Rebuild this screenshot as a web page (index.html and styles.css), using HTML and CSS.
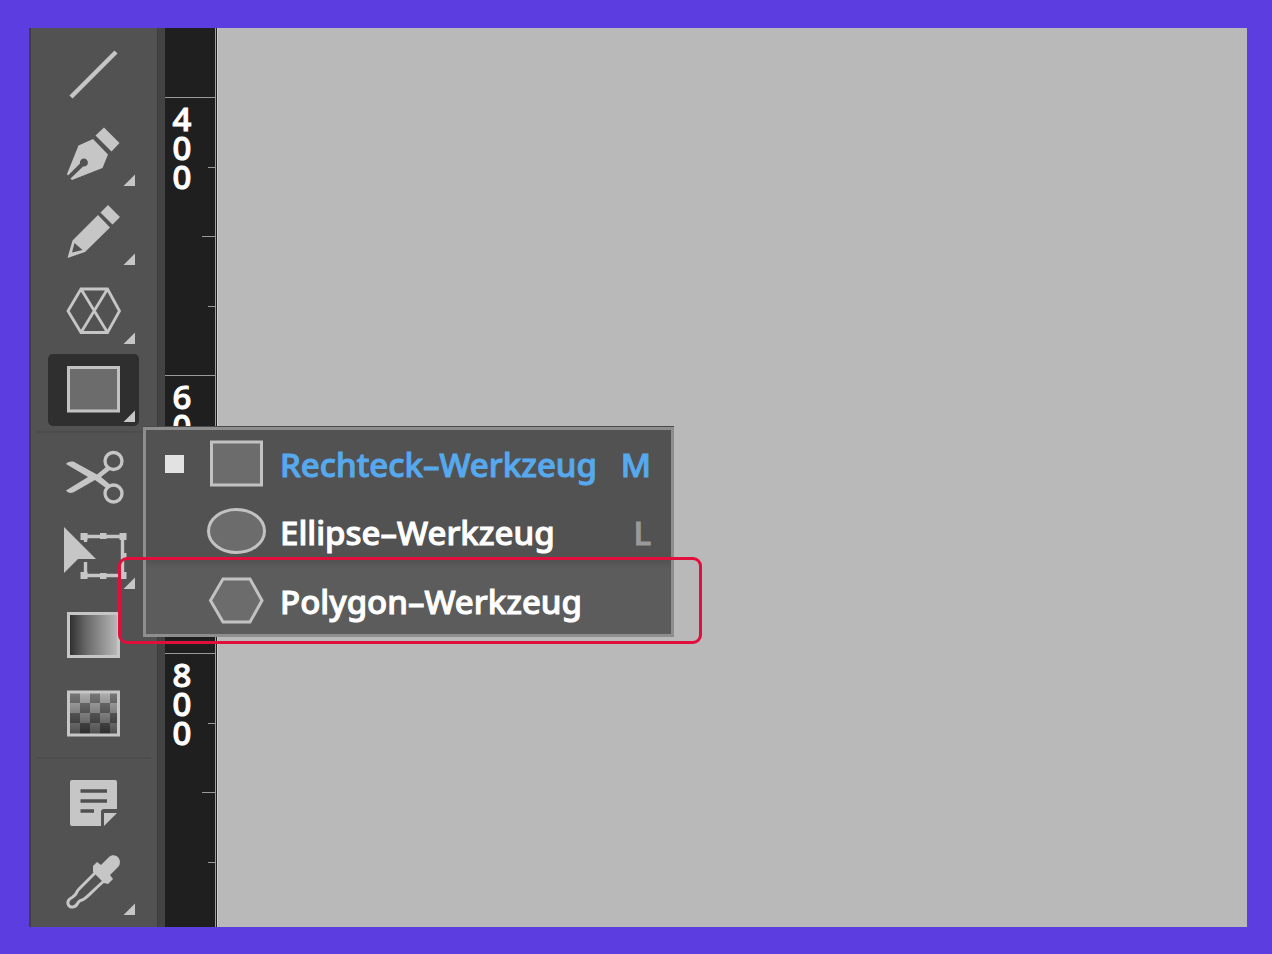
FILE: index.html
```html
<!DOCTYPE html>
<html lang="de">
<head>
<meta charset="utf-8">
<title>Polygon-Werkzeug</title>
<link rel="stylesheet" href="styles.css">
</head>
<body>
<main class="workspace">
  <nav class="toolbar" aria-label="Werkzeuge">
    <div class="group">
      <button class="tool" aria-label="Liniensegment"><svg viewBox="0 0 91 72"><path class="line" stroke-width="4.400" d="M23 59 68 14"/></svg></button>
      <button class="tool" aria-label="Zeichenstift"><svg viewBox="0 0 91 72"><path class="solid" d="M56 10.500 71.500 26 63.500 34.500 47.500 18.500ZM45 22 60 37.500 54.500 51 24 63 22.500 61.500 35 49.500A4 4 0 1 0 32 46.500L20 58.500 19 57 30.500 28.500Z"/><path class="corner" d="M87 57.500V69H75.500Z"/></svg></button>
      <button class="tool" aria-label="Buntstift"><svg viewBox="0 0 91 72"><path class="solid" fill-rule="evenodd" d="M60 9 72 21 64.500 28.500 52.500 16.500ZM50 19 62 31.500 37 56 19.500 62 24.500 44.500ZM26.500 47 24 56.500 34.500 54Z"/><path class="corner" d="M87 57.500V69H75.500Z"/></svg></button>
      <button class="tool" aria-label="Polarraster"><svg viewBox="0 0 91 72"><path class="line" stroke-width="2.800" d="M33 14H59.500L71.500 36 59.500 57.500H33L20 36ZM33 14 59.500 57.500M59.500 14 33 57.500"/><path class="corner" d="M87 57.500V69H75.500Z"/></svg></button>
      <button class="tool selected" aria-label="Rechteck-Werkzeug"><svg viewBox="0 0 91 72"><rect class="shape" x="20.500" y="13.500" width="50" height="43.500"/><path class="corner" d="M87 56.500V68H75.500Z"/></svg></button>
    </div>
    <div class="group">
      <button class="tool" aria-label="Schere"><svg viewBox="0 0 91 72"><circle class="line" stroke-width="3.300" cx="65.500" cy="20" r="8.500"/><circle class="line" stroke-width="3.300" cx="65.500" cy="52.500" r="8.500"/><path class="solid" d="M18 23C21 20 25 20 28 22L49 33.500 58 26 62 29 53 36 62 43.500 58 47 47 39 27 50.500C23 53 20 52 18 49.500L40 36Z"/></svg></button>
      <button class="tool" aria-label="Frei transformieren"><svg viewBox="0 0 91 72"><path class="line" stroke-width="3.400" d="M37 16.500H74.500V55.500H37M37.500 13V22M37.500 42V58"/><path class="solid" d="M32.500 13H39.500V20H32.500ZM52 13H58.500V19H52ZM71.500 13H78.500V20H71.500ZM74 33H78.500V39H74ZM32.500 52H39.500V59H32.500ZM52 53H58.500V59H52ZM71.500 52H78.500V59H71.500Z"/><path class="cursor" d="M16 7 48 39H30L16 53Z"/><path class="corner" d="M87 57.500V69H75.500Z"/></svg></button>
      <button class="tool" aria-label="Verlauf"><svg viewBox="0 0 91 72"><defs><linearGradient id="fade"><stop offset="0" stop-color="#2c2c2c"/><stop offset=".35" stop-color="#686868"/><stop offset="1" stop-color="#bbb"/></linearGradient></defs><rect x="20.500" y="14.500" width="50" height="43" fill="url(#fade)" stroke="#c6c6c6" stroke-width="3"/></svg></button>
      <button class="tool" aria-label="Transparenz"><svg viewBox="0 0 91 72"><defs><linearGradient id="light" x2="0" y2="1"><stop offset="0" stop-color="#b0b0b0"/><stop offset="1" stop-color="#4b4b4b"/></linearGradient><linearGradient id="dark" gradientUnits="userSpaceOnUse" x1="0" y1="15" x2="0" y2="57"><stop offset="0" stop-color="#777"/><stop offset="1" stop-color="#2b2b2b"/></linearGradient></defs><rect x="20.500" y="14" width="50" height="43" fill="url(#light)"/><path fill="url(#dark)" d="M22 15H32V25H22ZM42 15H52V25H42ZM62 15H70V25H62ZM32 25H42V35H32ZM52 25H62V35H52ZM22 35H32V45H22ZM42 35H52V45H42ZM62 35H70V45H62ZM32 45H42V56H32ZM52 45H62V56H52Z"/><rect class="line" stroke-width="3" x="20.500" y="14" width="50" height="43"/></svg></button>
    </div>
    <div class="group last">
      <button class="tool" aria-label="Notiz"><svg viewBox="0 0 91 72"><path class="solid" d="M24 13H67Q69 13 69 15V42H56Q53 42 53 45V59H24Q22 59 22 57V15Q22 13 24 13Z"/><path class="solid" d="M56 46H69L56 59Z"/><path stroke="#505050" stroke-width="3.400" d="M32.500 24H59M32.500 34H59M32.500 44H46"/></svg></button>
      <button class="tool" aria-label="Pipette"><svg viewBox="0 0 91 72"><path class="line" stroke-width="3" stroke-linejoin="round" d="M48 26 31 43C27 47 30 48 24 51.500C17 55 20 62 25 61C31 60 28 55 34 54C38 53 40 49 57 34"/><path class="solid" d="M45 20 49 16 53 19 61 11C66 6 75 12 71 20L62 29 65 33 60 38 56 37 45 26Z"/><path class="corner" d="M87 57.500V69H75.500Z"/></svg></button>
    </div>
  </nav>
  <aside class="ruler" aria-label="Lineal">
    <div class="segment first"></div>
    <div class="segment"><span class="digits">400</span></div>
    <div class="segment"><span class="digits">600</span></div>
    <div class="segment rest"><span class="digits">800</span></div>
  </aside>
  <section class="canvas" aria-label="Zeichenfläche"></section>

  <div class="menu" role="menu">
    <button class="item active" role="menuitem"><span class="mark"></span><svg class="icon" viewBox="0 0 60 48"><rect class="shape" x="5.500" y="2" width="50" height="43"/></svg><span class="name">Rechteck–Werkzeug</span><span class="key">M</span></button>
    <button class="item ellipse" role="menuitem"><span></span><svg class="icon" viewBox="0 0 60 48"><ellipse class="shape" cx="30.500" cy="23" rx="28" ry="21.500"/></svg><span class="name">Ellipse–Werkzeug</span><span class="key">L</span></button>
    <button class="item polygon" role="menuitem"><span></span><svg class="icon" viewBox="0 0 60 48"><path class="shape" d="M17 2H44L56 23.500 44 45H17L4.500 23.500Z"/></svg><span class="name">Polygon–Werkzeug</span><span class="key"></span></button>
  </div>
  <div class="highlight"></div>
</main>
</body>
</html>
```

FILE: styles.css
```css
* { box-sizing: border-box; }
body {
  margin: 0;
  min-height: 100vh;
  display: flex;
  padding: 28px 25px 27px 29px;
  background: #5c3de0;
  font-family: "Noto Sans", "Open Sans", sans-serif;
}
button {
  border: 0;
  margin: 0;
  padding: 0;
  background: none;
  font: inherit;
  color: inherit;
}
.workspace {
  position: relative;
  flex: 1;
  display: flex;
  overflow: hidden;
  background: #b9b9b9;
}
.toolbar {
  width: 136px;
  padding: 10px 0 0 17px;
  background: #525252;
  border-left: 2px solid #3f3f3f;
  border-right: 7px solid #434343;
  box-shadow: inset -1px 0 #3d3d3d;
}
.group {
  display: flex;
  flex-direction: column;
  gap: 7px;
  width: 91px;
}
.group + .group {
  position: relative;
  margin-top: 15px;
}
.group + .last { margin-top: 17px; }
.group + .group::before {
  content: "";
  position: absolute;
  top: -10px;
  left: -12px;
  right: -12px;
  height: 2px;
  background: #4c4c4c;
}
.tool { height: 72px; border-radius: 5px; }
.tool svg { display: block; width: 100%; height: 100%; }
.selected { background: #2f2f2f; }
.line { fill: none; stroke: #c6c6c6; }
.solid, .corner { fill: #c6c6c6; }
.cursor { fill: #c6c6c6; stroke: #525252; stroke-width: 4; paint-order: stroke; }
.shape { fill: #6c6c6c; stroke: #c2c2c2; stroke-width: 3; }

.ruler {
  display: flex;
  flex-direction: column;
  width: 53px;
  background: #1f1f1f;
  border-right: 1px solid #d0d0d0;
  box-shadow: inset -1px 0 #1f1f1f, inset -2px 0 #a0a0a0;
}
.segment {
  height: 278px;
  margin-right: 2px;
  padding: 6px 0 0 6px;
  border-top: 1px solid #9a9a9a;
  background:
    linear-gradient(#9a9a9a, #9a9a9a) right 69px / 7px 1px no-repeat,
    linear-gradient(#9a9a9a, #9a9a9a) right 138px / 13px 1px no-repeat,
    linear-gradient(#9a9a9a, #9a9a9a) right 208px / 7px 1px no-repeat;
}
.first { height: 69px; border: 0; background: none; }
.rest { flex: 1; height: auto; }
.digits {
  display: block;
  width: 22px;
  word-break: break-all;
  text-align: center;
  font-size: 33px;
  font-weight: 500;
  line-height: 29px;
  color: #fff;
  -webkit-text-stroke: 1px #fff;
}
.canvas { flex: 1; background: #b9b9b9; }

.menu {
  position: absolute;
  top: 399px;
  left: 114px;
  width: 531px;
  display: flex;
  flex-direction: column;
  background: #525252;
  border: 3px solid #8e8e8e;
  box-shadow: 0 -1px #4a4a4a;
  color: #fff;
  font-size: 33px;
  font-weight: 500;
  -webkit-text-stroke: 1px;
}
.item {
  display: grid;
  grid-template-columns: 22px 60px 1fr auto;
  align-items: center;
  height: 68px;
  padding: 0 20px 0 19px;
  text-align: left;
}
.mark { width: 19px; height: 18px; background: #e2e2e2; }
.icon { width: 60px; height: 48px; margin-left: 19px; }
.name, .key { padding-top: 2px; line-height: 40px; }
.name { margin-left: 33px; white-space: nowrap; }
.key { color: #999; }
.active, .active .key { color: #56a9ee; }
.ellipse { height: 61px; padding-top: 6px; }
.polygon {
  height: 75px;
  padding-top: 8px;
  background: linear-gradient(#525252, #5c5c5c 10px);
}
.highlight {
  position: absolute;
  top: 529px;
  left: 89px;
  width: 584px;
  height: 87px;
  border: 3px solid #e00f3c;
  border-radius: 9px;
  pointer-events: none;
}
```
